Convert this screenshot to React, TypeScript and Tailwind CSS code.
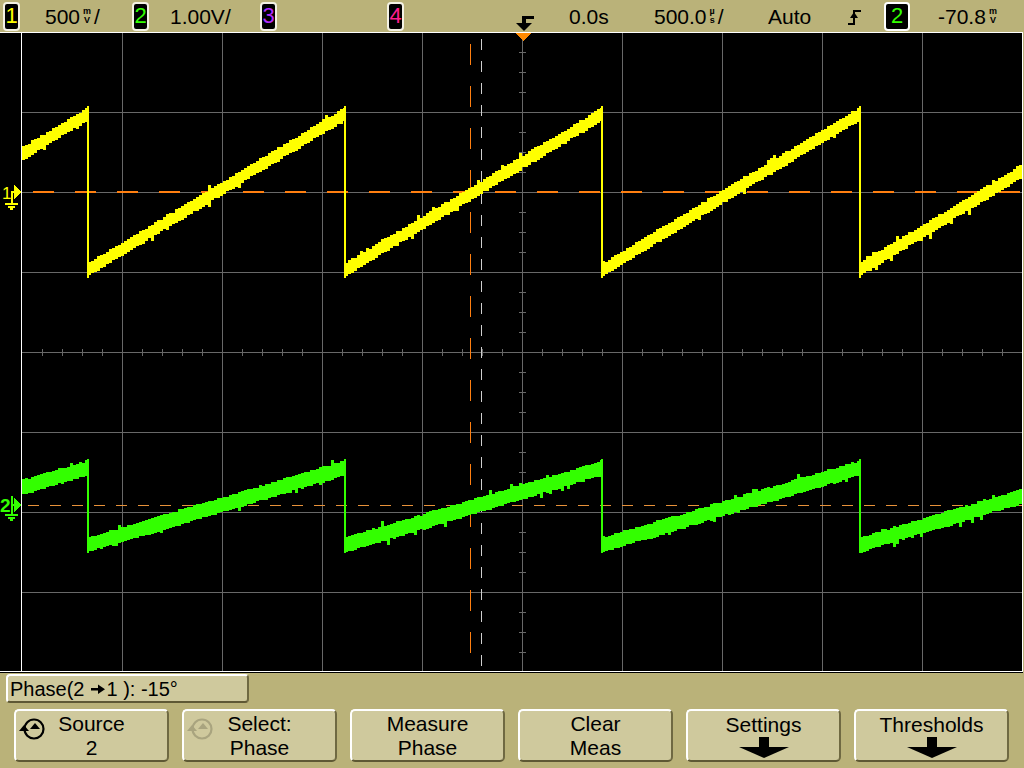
import React from "react";

function rng(seed: number) {
  let s = seed;
  return () => {
    s = (s * 1103515245 + 12345) & 0x7fffffff;
    return s / 0x7fffffff;
  };
}

function sawPaths(
  falls: number[],
  yLow: number,
  yHigh: number,
  half: number,
  seed: number
) {
  const r = rng(seed);
  const xmin = 22;
  const xmax = 1022;
  const out: string[] = [];
  for (let k = 0; k < falls.length - 1; k++) {
    const f0 = falls[k];
    const P = falls[k + 1] - falls[k];
    const a = Math.max(f0, xmin);
    const b = Math.min(falls[k + 1], xmax);
    if (b <= a) continue;
    const xs: number[] = [];
    for (let x = a; x < b; x += 3) xs.push(Math.round(x));
    xs.push(Math.round(b));
    const top: number[] = [];
    const bot: number[] = [];
    for (let i = 0; i < xs.length; i++) {
      const c = yLow - ((yLow - yHigh) * (xs[i] - f0)) / P;
      let t = c - half - r() * 1.8;
      let bb = c + half + r() * 1.8;
      if (r() < 0.05) t -= 2 + r() * 3;
      if (r() < 0.05) bb += 2 + r() * 3;
      top.push(Math.round(t));
      bot.push(Math.round(bb));
    }
    let d = `M${xs[0]} ${top[0]}`;
    for (let i = 0; i < xs.length - 1; i++) {
      d += ` L${xs[i + 1]} ${top[i]} L${xs[i + 1]} ${top[i + 1]}`;
    }
    d += ` L${xs[xs.length - 1]} ${bot[bot.length - 1]}`;
    for (let i = xs.length - 1; i > 0; i--) {
      d += ` L${xs[i - 1]} ${bot[i]} L${xs[i - 1]} ${bot[i - 1]}`;
    }
    d += " Z";
    out.push(d);
  }
  return out;
}

const P = 257.2;
const falls = [-1, 0, 1, 2, 3, 4, 5].map((k) => 88 + P * k);

function Scope() {
  const vx = [122, 222, 322, 422, 522, 622, 722, 822, 922];
  const hy = [112, 192, 272, 352, 432, 512, 592];
  const xticks: number[] = [];
  for (let x = 42; x < 1022; x += 20) xticks.push(x);
  const yticks: number[] = [];
  for (let y = 52; y < 672; y += 20) yticks.push(y);
  const yellow = sawPaths(falls, 270, 114, 6.5, 7);
  const green = sawPaths(falls, 545, 468, 7, 19);
  const visFalls = falls.filter((f) => f > 22 && f < 1022);
  const grid = "#686868";
  return (
    <svg
      width={1023}
      height={641}
      viewBox="0 32 1023 641"
      shapeRendering="crispEdges"
      className="block"
    >
      <rect x={0} y={32} width={1023} height={641} fill="#000" />
      {vx.map((x) => (
        <line key={"v" + x} x1={x + 0.5} y1={32} x2={x + 0.5} y2={672} stroke={grid} strokeWidth={1} />
      ))}
      {hy.map((y) => (
        <line key={"h" + y} x1={22} y1={y + 0.5} x2={1022} y2={y + 0.5} stroke={grid} strokeWidth={1} />
      ))}
      {xticks.map((x) => (
        <line key={"xt" + x} x1={x + 0.5} y1={349} x2={x + 0.5} y2={356} stroke={grid} strokeWidth={1} />
      ))}
      {yticks.map((y) => (
        <line key={"yt" + y} x1={519} y1={y + 0.5} x2={526} y2={y + 0.5} stroke={grid} strokeWidth={1} />
      ))}
      <line x1={470.5} y1={32} x2={470.5} y2={672} stroke="#ff7f10" strokeWidth={1.5} strokeDasharray="21 21" strokeDashoffset={30} />
      <line x1={481.5} y1={32} x2={481.5} y2={672} stroke="#cfcfcf" strokeWidth={1} strokeDasharray="11 11" strokeDashoffset={15} />
      <line x1={22} y1={192} x2={1022} y2={192} stroke="#ff7f10" strokeWidth={1.5} strokeDasharray="21 21" strokeDashoffset={31} />
      <line x1={22} y1={505.5} x2={1022} y2={505.5} stroke="#e8923a" strokeWidth={1} strokeDasharray="11 11" strokeDashoffset={16} />
      {yellow.map((d, i) => (
        <path key={"y" + i} d={d} fill="#ffff00" />
      ))}
      {visFalls.map((f) => (
        <rect key={"yf" + f} x={Math.round(f) - 1} y={106} width={2} height={172} fill="#ffff00" />
      ))}
      {green.map((d, i) => (
        <path key={"g" + i} d={d} fill="#33ff00" />
      ))}
      {visFalls.map((f) => (
        <rect key={"gf" + f} x={Math.round(f) - 1} y={459} width={2} height={94} fill="#33ff00" />
      ))}
      <polygon points="515,33 531,33 523,41" fill="#ff8a00" />
      <line x1={0} y1={32.5} x2={1023} y2={32.5} stroke="#fff" strokeWidth={1} />
      <line x1={0} y1={671.5} x2={1023} y2={671.5} stroke="#fff" strokeWidth={1} />
      <line x1={21.5} y1={32} x2={21.5} y2={672} stroke="#fff" strokeWidth={1} />
      <line x1={1022.5} y1={32} x2={1022.5} y2={672} stroke="#fff" strokeWidth={1} />
      <g fill="#ffff00">
        <text x={2} y={199} fontSize={17} fontFamily="Liberation Sans, sans-serif" fontWeight={400}>
          1
        </text>
        <polygon points="14,185 21,192 14,199" />
        <rect x={11} y={191} width={4} height={1.5} />
        <rect x={11} y={191} width={1.5} height={12} />
        <rect x={5} y={203} width={13} height={1.5} />
        <rect x={8} y={206} width={7} height={1.5} />
        <rect x={10} y={208} width={3} height={1.5} />
      </g>
      <g fill="#33ff00">
        <text x={0} y={512} fontSize={19} fontFamily="Liberation Sans, sans-serif" fontWeight={700}>
          2
        </text>
        <polygon points="14,497 21,505 14,513" />
        <rect x={11} y={496} width={1.5} height={18} />
        <rect x={11} y={504} width={4} height={1.5} />
        <rect x={5} y={514} width={13} height={1.5} />
        <rect x={8} y={517} width={7} height={1.5} />
        <rect x={10} y={519} width={3} height={1.5} />
      </g>
    </svg>
  );
}

function Stack({ a, b }: { a: string; b: string }) {
  return (
    <span className="inline-flex flex-col items-center text-[9px] leading-[9px] mx-[3px] font-bold">
      <span>{a}</span>
      <span>{b}</span>
    </span>
  );
}

function TrigIcon() {
  return (
    <svg width={20} height={32} viewBox="0 0 20 32">
      <rect x={7} y={16} width={11} height={3} fill="#000" />
      <rect x={6} y={16} width={4} height={8} fill="#000" />
      <polygon points="0,23 16,23 8,31" fill="#000" />
    </svg>
  );
}

function EdgeIcon() {
  return (
    <svg width={16} height={32} viewBox="0 0 16 32">
      <path d="M1 24 H7 V11 H14" stroke="#000" strokeWidth={2} fill="none" />
      <polygon points="3,18 11,18 7,12" fill="#000" />
    </svg>
  );
}

function KnobIcon({ color }: { color: string }) {
  return (
    <svg width={30} height={26} viewBox="0 0 30 26">
      <circle cx={16} cy={13} r={9.5} stroke={color} strokeWidth={2.2} fill="none" />
      <polygon points="1,15 11,15 6,9" fill={color} />
      <polygon points="12,13 22,13 17,7" fill={color} />
    </svg>
  );
}

function DownArrow() {
  return (
    <svg width={50} height={21} viewBox="0 0 50 21" className="mx-auto">
      <rect x={20} y={0} width={10} height={10} fill="#000" />
      <polygon points="0,10 50,10 25,21" fill="#000" />
    </svg>
  );
}

function RightArrow() {
  return (
    <svg width={14} height={10} viewBox="0 0 14 10" className="ml-[6px] mr-[2px]">
      <rect x={0} y={4} width={9} height={2.5} fill="#000" />
      <polygon points="7,0.5 14,5.25 7,10" fill="#000" />
    </svg>
  );
}

const btnCls =
  "relative w-[155px] h-[53px] shrink-0 rounded-[5px] bg-[#cfc99d] border-t-2 border-l-2 border-t-white border-l-white border-b-2 border-r-2 border-b-[#5e5834] border-r-[#6f6942] flex flex-col items-center justify-center text-[21px] leading-[24px] text-black";

export default function App() {
  return (
    <div className="w-[1024px] h-[768px] bg-[#bab279] flex flex-col overflow-hidden font-['Liberation_Sans',Arial,sans-serif] text-black">
      <div className="h-[32px] flex items-center shrink-0 text-[21px] leading-none">
        <div className="w-[45px] flex shrink-0">
          <div className="ml-[3px] w-[17px] h-[29px] bg-black border-2 border-[#f4f2e4] rounded-[4px] flex items-center justify-center text-[22px] text-[#ffff00]">
            1
          </div>
        </div>
        <div className="w-[87px] flex items-center shrink-0">
          500
          <Stack a="m" b="V" />/
        </div>
        <div className="w-[38px] flex shrink-0">
          <div className="w-[17px] h-[29px] bg-black border-2 border-[#f4f2e4] rounded-[4px] flex items-center justify-center text-[22px] text-[#33ff00]">
            2
          </div>
        </div>
        <div className="w-[90px] flex items-center shrink-0">1.00V/</div>
        <div className="w-[127px] flex shrink-0">
          <div className="w-[17px] h-[29px] bg-black border-2 border-[#f4f2e4] rounded-[4px] flex items-center justify-center text-[22px] text-[#b22cff]">
            3
          </div>
        </div>
        <div className="w-[129px] flex shrink-0">
          <div className="w-[17px] h-[29px] bg-black border-2 border-[#f4f2e4] rounded-[4px] flex items-center justify-center text-[22px] text-[#ff1e8c]">
            4
          </div>
        </div>
        <div className="w-[53px] flex shrink-0">
          <TrigIcon />
        </div>
        <div className="w-[85px] flex items-center shrink-0">0.0s</div>
        <div className="w-[114px] flex items-center shrink-0">
          500.0
          <Stack a="µ" b="s" />/
        </div>
        <div className="w-[79px] flex items-center shrink-0">Auto</div>
        <div className="w-[37px] flex shrink-0">
          <EdgeIcon />
        </div>
        <div className="w-[54px] flex shrink-0">
          <div className="w-[26px] h-[29px] bg-black border-2 border-white rounded-[4px] flex items-center justify-center text-[22px] text-[#33ff00]">
            2
          </div>
        </div>
        <div className="flex items-center shrink-0">
          -70.8
          <Stack a="m" b="V" />
        </div>
      </div>

      <div className="h-[641px] shrink-0 flex">
        <Scope />
      </div>

      <div className="flex flex-col">
        <div className="ml-[6px] mt-[1px] w-[243px] h-[29px] rounded-[4px] bg-[#cfc99d] border-t-2 border-l-2 border-t-white border-l-white border-b-2 border-r-2 border-b-[#5e5834] border-r-[#6f6942] flex items-center pl-[2px] text-[20px] leading-none">
          <span>Phase(2</span>
          <RightArrow />
          <span>1 ): -15°</span>
        </div>
        <div className="flex gap-[13px] pl-[14px] mt-[6px]">
          <div className={btnCls}>
            <div className="absolute left-[2px] top-[5px]">
              <KnobIcon color="#000" />
            </div>
            <span>Source</span>
            <span>2</span>
          </div>
          <div className={btnCls}>
            <div className="absolute left-[2px] top-[5px]">
              <KnobIcon color="#a9a47f" />
            </div>
            <span>Select:</span>
            <span>Phase</span>
          </div>
          <div className={btnCls}>
            <span>Measure</span>
            <span>Phase</span>
          </div>
          <div className={btnCls}>
            <span>Clear</span>
            <span>Meas</span>
          </div>
          <div className={btnCls}>
            <span>Settings</span>
            <DownArrow />
          </div>
          <div className={btnCls}>
            <span>Thresholds</span>
            <DownArrow />
          </div>
        </div>
      </div>
    </div>
  );
}
